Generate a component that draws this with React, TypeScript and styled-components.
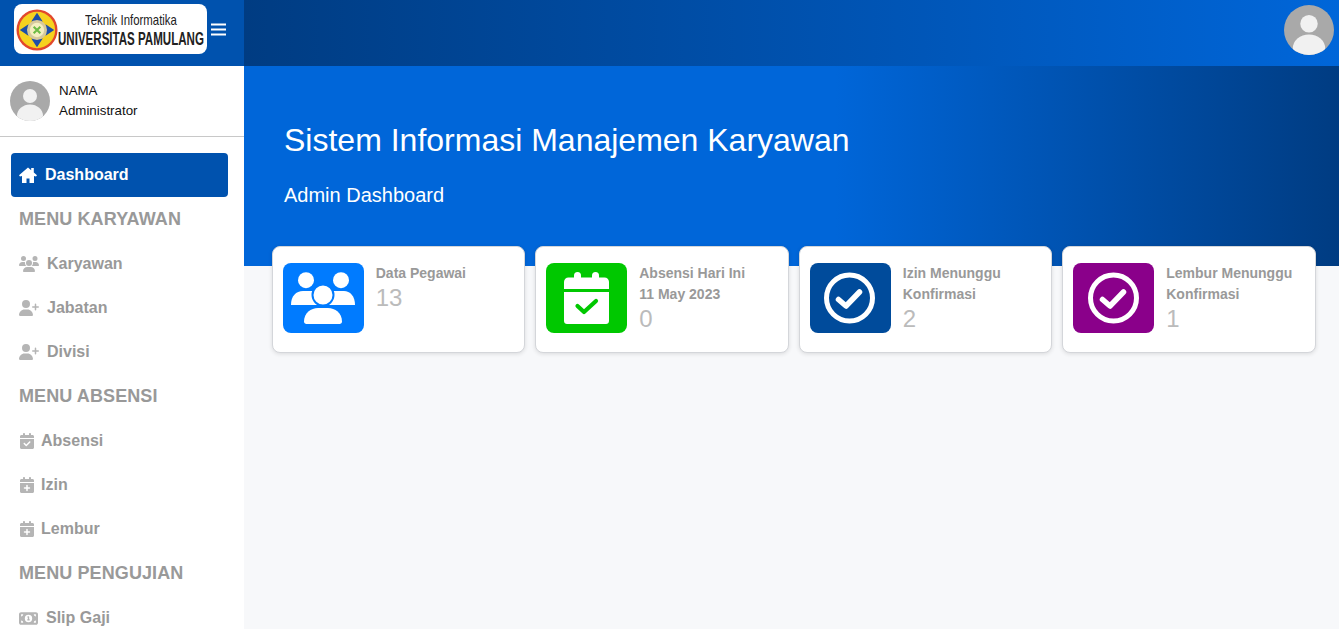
import styled, { createGlobalStyle } from "styled-components";
import { ReactNode } from "react";
import {
  FaCalendarCheck,
  FaCalendarPlus,
  FaMoneyBill1,
  FaUserPlus,
  FaUsers,
} from "react-icons/fa6";

const GlobalStyle = createGlobalStyle`
  html, body {
    margin: 0;
    height: 100%;
    overflow: hidden;
    background: #f7f8fa;
    font-family: "Liberation Sans", Arial, sans-serif;
  }
`;

const Avatar = ({ size }: { size: number }) => (
  <svg width={size} height={size} viewBox="0 0 40 40">
    <defs>
      <clipPath id={`avatar-${size}`}>
        <circle cx="20" cy="20" r="20" />
      </clipPath>
    </defs>
    <g clipPath={`url(#avatar-${size})`}>
      <rect width="40" height="40" fill="#a9a9a9" />
      <circle cx="20" cy="15" r="7" fill="#f1f1f1" />
      <ellipse cx="20" cy="35" rx="13" ry="11.5" fill="#f1f1f1" />
    </g>
  </svg>
);

const Emblem = () => (
  <svg width="42" height="42" viewBox="0 0 44 44">
    <circle cx="22" cy="22" r="21.5" fill="#e2482c" />
    <circle cx="22" cy="22" r="19" fill="#f6d21f" />
    <path d="M22 4 L28 13 H16 Z" fill="#1d4fa8" />
    <path d="M22 40 L28 31 H16 Z" fill="#1d4fa8" />
    <path d="M4 22 L13 16 V28 Z" fill="#1d4fa8" />
    <path d="M40 22 L31 16 V28 Z" fill="#1d4fa8" />
    <circle cx="22" cy="22" r="10.5" fill="#d6c99c" />
    <circle cx="22" cy="22" r="7.5" fill="#f4efc0" />
    <path d="M18.5 18.5 L25.5 25.5 M25.5 18.5 L18.5 25.5" stroke="#6dbb45" strokeWidth="2.2" />
  </svg>
);

const HomeIcon = () => (
  <svg width="18" height="16" viewBox="0 0 18 16" fill="currentColor">
    <path d="M9 0.5 L0 8.3 L1 9.6 L3 8.9 V16 H7.5 V11.5 H10.5 V16 H15 V8.9 L17 9.6 L18 8.3 L14.8 5.5 V1 H12.2 V3.3 Z" />
  </svg>
);

const PeopleIcon = () => (
  <svg width="64" height="52" viewBox="0 0 64 52" fill="#fff">
    <circle cx="15" cy="8.2" r="8" />
    <circle cx="50" cy="8.2" r="8" />
    <path d="M0 33 C0 24 5 19 12 19 H53 C59 19 64 24 64 33 Z" />
    <circle cx="32" cy="23" r="10.5" stroke="#007bff" strokeWidth="2" />
    <path d="M22 34 H42 V36 H22 Z" fill="#007bff" />
    <path d="M13 49.5 C13 41 20 36 27 36 H37 C44 36 51 41 51 49.5 C51 51 50 52 48.5 52 H15.5 C14 52 13 51 13 49.5 Z" />
  </svg>
);

const CalendarIcon = ({ mark }: { mark: string }) => (
  <svg width="45" height="52" viewBox="0 0 45 52" fill="#fff">
    <rect x="10" y="0" width="7" height="10" rx="3.5" />
    <rect x="28" y="0" width="7" height="10" rx="3.5" />
    <path d="M0 17 V10 C0 7.5 2 5.5 4.5 5.5 H40.5 C43 5.5 45 7.5 45 10 V17 Z" />
    <path d="M0 20 H45 V49 C45 50.7 43.7 52 42 52 H3 C1.3 52 0 50.7 0 49 Z" />
    <path
      d="M13.5 34 L20 40 L32 29"
      fill="none"
      stroke={mark}
      strokeWidth="4.2"
      strokeLinecap="round"
      strokeLinejoin="round"
    />
  </svg>
);

const CheckRingIcon = () => (
  <svg width="52" height="52" viewBox="0 0 52 52" fill="none" stroke="#fff">
    <circle cx="25.5" cy="26" r="23" strokeWidth="5" />
    <path
      d="M14.5 27.5 L22 34 L35.5 20"
      strokeWidth="5.5"
      strokeLinecap="round"
      strokeLinejoin="round"
    />
  </svg>
);

const MenuIcon = () => (
  <svg width="15" height="13" viewBox="0 0 15 13" fill="#fff">
    <rect y="0.5" width="15" height="2" />
    <rect y="5.5" width="15" height="2" />
    <rect y="10.5" width="15" height="2" />
  </svg>
);

type NavEntry = { icon: ReactNode; label: string; gap: number };

const karyawanMenu: NavEntry[] = [
  { icon: <FaUsers size={20} />, label: "Karyawan", gap: 8 },
  { icon: <FaUserPlus size={20} />, label: "Jabatan", gap: 8 },
  { icon: <FaUserPlus size={20} />, label: "Divisi", gap: 8 },
];

const absensiMenu: NavEntry[] = [
  { icon: <FaCalendarCheck size={16} />, label: "Absensi", gap: 6 },
  { icon: <FaCalendarPlus size={16} />, label: "Izin", gap: 6 },
  { icon: <FaCalendarPlus size={16} />, label: "Lembur", gap: 6 },
];

const pengujianMenu: NavEntry[] = [
  { icon: <FaMoneyBill1 size={19} />, label: "Slip Gaji", gap: 8 },
];

const NavList = ({ entries }: { entries: NavEntry[] }) => (
  <>
    {entries.map((entry) => (
      <NavItem key={entry.label} $gap={entry.gap}>
        {entry.icon}
        <span>{entry.label}</span>
      </NavItem>
    ))}
  </>
);

const stats = [
  { color: "#007bff", icon: <PeopleIcon />, lines: ["Data Pegawai"], value: "13" },
  { color: "#00c800", icon: <CalendarIcon mark="#00c800" />, lines: ["Absensi Hari Ini", "11 May 2023"], value: "0" },
  { color: "#004b9b", icon: <CheckRingIcon />, lines: ["Izin Menunggu", "Konfirmasi"], value: "2" },
  { color: "#8a008a", icon: <CheckRingIcon />, lines: ["Lembur Menunggu", "Konfirmasi"], value: "1" },
];

export default function App() {
  return (
    <Page>
      <GlobalStyle />
      <TopBar>
        <Brand>
          <Logo>
            <Emblem />
            <LogoText>
              <LogoFaculty>Teknik Informatika</LogoFaculty>
              <LogoCampus>UNIVERSITAS PAMULANG</LogoCampus>
            </LogoText>
          </Logo>
          <MenuIcon />
        </Brand>
        <TopBarRight>
          <Avatar size={50} />
        </TopBarRight>
      </TopBar>
      <Body>
        <Sidebar>
          <UserPanel>
            <Avatar size={40} />
            <UserInfo>
              <span>NAMA</span>
              <span>Administrator</span>
            </UserInfo>
          </UserPanel>
          <Nav>
            <ActiveItem>
              <HomeIcon />
              <span>Dashboard</span>
            </ActiveItem>
            <SectionTitle>MENU KARYAWAN</SectionTitle>
            <NavList entries={karyawanMenu} />
            <SectionTitle>MENU ABSENSI</SectionTitle>
            <NavList entries={absensiMenu} />
            <SectionTitle>MENU PENGUJIAN</SectionTitle>
            <NavList entries={pengujianMenu} />
          </Nav>
        </Sidebar>
        <Main>
          <Hero>
            <HeroTitle>Sistem Informasi Manajemen Karyawan</HeroTitle>
            <HeroSubtitle>Admin Dashboard</HeroSubtitle>
          </Hero>
          <CardGrid>
            {stats.map((stat) => (
              <Card key={stat.lines[0]}>
                <CardIcon $color={stat.color}>{stat.icon}</CardIcon>
                <CardBody>
                  {stat.lines.map((line) => (
                    <CardLabel key={line}>{line}</CardLabel>
                  ))}
                  <CardValue>{stat.value}</CardValue>
                </CardBody>
              </Card>
            ))}
          </CardGrid>
        </Main>
      </Body>
    </Page>
  );
}

const Page = styled.div`
  height: 100vh;
  display: flex;
  flex-direction: column;
  overflow: hidden;
`;

const TopBar = styled.header`
  height: 66px;
  flex: none;
  display: flex;
`;

const Brand = styled.div`
  width: 244px;
  flex: none;
  box-sizing: border-box;
  padding: 0 0 8px 14px;
  background: #0052ae;
  display: flex;
  align-items: center;
  gap: 4px;
`;

const Logo = styled.div`
  width: 193px;
  height: 50px;
  flex: none;
  box-sizing: border-box;
  padding-left: 2px;
  background: #fff;
  border-radius: 8px;
  display: flex;
  align-items: center;
  overflow: hidden;

  svg {
    flex: none;
    margin-top: 1px;
  }
`;

const LogoText = styled.div`
  display: flex;
  flex-direction: column;
  color: #222;
  white-space: nowrap;
  margin-top: 3px;
`;

/* no condensed face is installed, so the wordmark is squeezed sideways */
const LogoFaculty = styled.span`
  font-size: 15px;
  line-height: 17px;
  margin-left: 27px;
  transform: scaleX(0.76);
  transform-origin: left center;
`;

const LogoCampus = styled.span`
  font-size: 19px;
  line-height: 22px;
  font-weight: 700;
  transform: scaleX(0.608);
  transform-origin: left center;
`;

const TopBarRight = styled.div`
  flex: 1;
  display: flex;
  justify-content: flex-end;
  align-items: center;
  padding: 0 5px 6px 0;
  background: linear-gradient(90deg, #003c82 0%, #0066d9 100%);
`;

const Body = styled.div`
  flex: 1;
  min-height: 0;
  display: flex;
`;

const Sidebar = styled.aside`
  width: 244px;
  flex: none;
  background: #fff;
  overflow: hidden;
`;

const UserPanel = styled.div`
  height: 71px;
  box-sizing: border-box;
  padding: 15px 10px 0;
  display: flex;
  gap: 9px;
  border-bottom: 1px solid #c8c8c8;
`;

const UserInfo = styled.div`
  display: flex;
  flex-direction: column;
  font-size: 13.33px;
  line-height: 20px;
  color: #111;
`;

const Nav = styled.nav`
  padding: 16px 16px 0 11px;
`;

const ActiveItem = styled.div`
  height: 44px;
  padding-left: 8px;
  display: flex;
  align-items: center;
  gap: 8px;
  background: #0052ae;
  border-radius: 4px;
  color: #fff;
  font-size: 16px;
  font-weight: 700;
`;

const SectionTitle = styled.div`
  height: 45px;
  padding-left: 8px;
  display: flex;
  align-items: center;
  color: #999;
  font-size: 18px;
  letter-spacing: 0.1px;
  font-weight: 700;
`;

const NavItem = styled.div<{ $gap: number }>`
  height: 44px;
  padding-left: 8px;
  display: flex;
  align-items: center;
  gap: ${(props) => props.$gap}px;
  color: #999;
  font-size: 16px;
  font-weight: 700;

  svg {
    color: #b5b5b5;
  }
`;

const Main = styled.main`
  flex: 1;
  min-width: 0;
  background: #f7f8fa;
`;

const Hero = styled.section`
  height: 200px;
  box-sizing: border-box;
  padding: 55px 40px 0;
  background: linear-gradient(90deg, #0066d9 0%, #0066d9 54%, #003c82 100%);
  color: #fff;
`;

const HeroTitle = styled.h1`
  margin: 0;
  font-size: 32px;
  line-height: 38px;
  font-weight: 400;
`;

const HeroSubtitle = styled.p`
  margin: 24px 0 0;
  font-size: 20px;
  line-height: 24px;
`;

const CardGrid = styled.div`
  display: grid;
  grid-template-columns: repeat(4, 1fr);
  gap: 10px;
  margin: -20px 23.25px 0 27.75px;
`;

const Card = styled.div`
  height: 107px;
  box-sizing: border-box;
  padding: 16px 10px;
  display: flex;
  gap: 12px;
  background: #fff;
  border: 1px solid #d4d6da;
  border-radius: 8px;
  box-shadow: 0 1px 4px rgba(0, 0, 0, 0.12);
`;

const CardIcon = styled.div<{ $color: string }>`
  width: 81px;
  height: 70px;
  flex: none;
  display: flex;
  align-items: center;
  justify-content: center;
  border-radius: 8px;
  background: ${(props) => props.$color};
`;

const CardBody = styled.div`
  display: flex;
  flex-direction: column;
`;

const CardLabel = styled.span`
  font-size: 14px;
  line-height: 21px;
  font-weight: 700;
  color: #999;
`;

const CardValue = styled.span`
  font-size: 24px;
  line-height: 28px;
  color: #bbb;
`;
